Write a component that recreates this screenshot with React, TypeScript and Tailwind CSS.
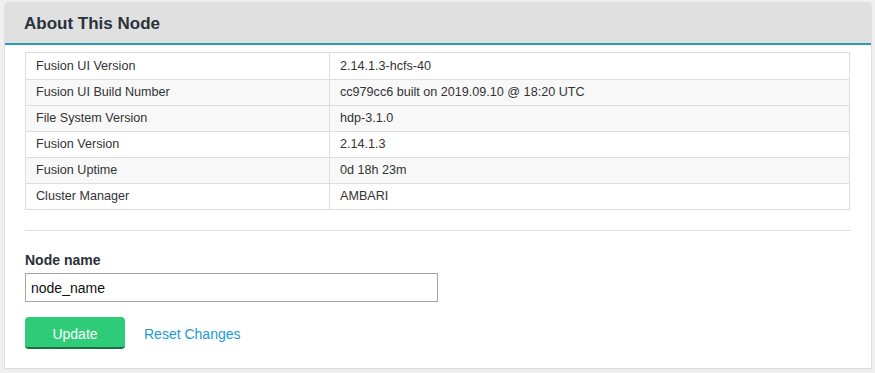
import React from "react";

const rows: [string, string, boolean][] = [
  ["Fusion UI Version", "2.14.1.3-hcfs-40", false],
  ["Fusion UI Build Number", "cc979cc6 built on 2019.09.10 @ 18:20 UTC", true],
  ["File System Version", "hdp-3.1.0", true],
  ["Fusion Version", "2.14.1.3", false],
  ["Fusion Uptime", "0d 18h 23m", true],
  ["Cluster Manager", "AMBARI", false],
];

export default function App() {
  return (
    <div
      className="w-[875px] h-[373px] bg-[#efefef] pt-[2px] pl-[4px] overflow-hidden"
      style={{ fontFamily: '"Liberation Sans", Arial, Helvetica, sans-serif' }}
    >
      <div className="w-[868px] bg-white border border-[#dedede] rounded-t-[4px] pb-[19px]">
        <div className="h-[42px] bg-[#e0e0e0] border-b-2 border-[#2b9ab2] px-[19px] flex items-center rounded-t-[3px]">
          <h1 className="text-[17px] font-bold text-[#2a323b] leading-none">About This Node</h1>
        </div>
        <div className="px-[20px]">
          <div className="mt-[7px] border border-[#dddddd] w-[825px]">
            {rows.map(([k, v, gray], i) => (
              <div
                key={k}
                className={`flex h-[26px] ${i > 0 ? "border-t border-[#dddddd]" : "h-[25px]"} ${gray ? "bg-[#f8f8f8]" : "bg-white"}`}
              >
                <div className="w-[304px] border-r border-[#dddddd] pl-[10px] flex items-center text-[12.6px] text-[#333]">
                  {k}
                </div>
                <div className="flex-1 pl-[10px] flex items-center text-[12.6px] text-[#333]">{v}</div>
              </div>
            ))}
          </div>
          <div className="mt-[20px] border-t border-[#e0e0e0] w-[826px]" />
          <div className="mt-[21px] text-[14px] font-bold text-[#2a2f36] leading-[16px]">Node name</div>
          <input
            className="mt-[5px] block w-[413px] h-[29px] border border-[#a5a5a5] px-[5px] text-[14px] text-[#111] outline-none"
            defaultValue="node_name"
            style={{ fontFamily: '"Liberation Sans", Arial, sans-serif' }}
          />
          <div className="mt-[15px] flex items-center">
            <button className="w-[100px] h-[32px] rounded-[4px] bg-[#2ecc78] border-b-2 border-[#1b6e40] text-white text-[14px] flex items-center justify-center pt-[4px]">
              Update
            </button>
            <a className="ml-[19px] mt-[2px] text-[14px] text-[#1a9ad6] cursor-pointer">Reset Changes</a>
          </div>
        </div>
      </div>
    </div>
  );
}
